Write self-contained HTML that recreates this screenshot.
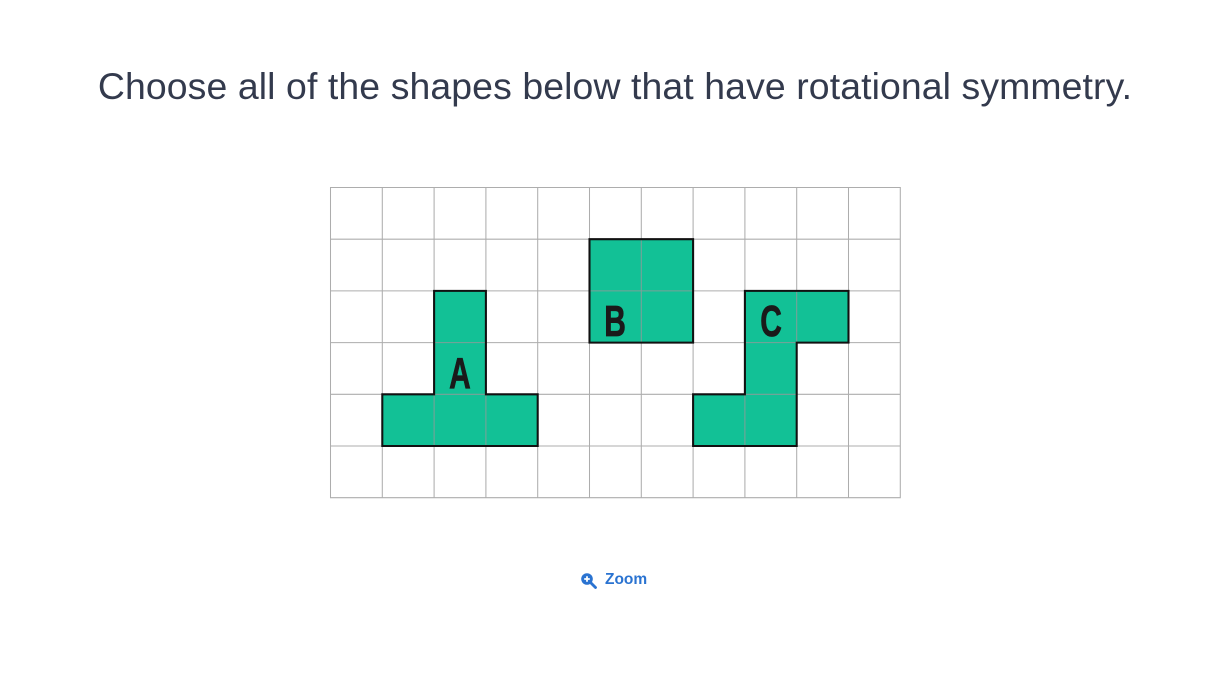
<!DOCTYPE html>
<html><head><style>
body{margin:0;width:1230px;height:673px;background:#fff;overflow:hidden;font-family:"Liberation Sans",sans-serif;}
h1{position:absolute;top:65px;left:0;width:1230px;text-align:center;margin:0;font-weight:400;font-size:37.4px;color:#333a4d;letter-spacing:0.1px;}
svg{position:absolute;left:0;top:0}
.z{position:absolute;left:580px;top:571px;color:#2a73d1;font-weight:700;font-size:15.5px;display:flex;align-items:center;gap:8px}
</style></head><body>
<h1>Choose all of the shapes below that have rotational symmetry.</h1>
<svg width="1230" height="673">
<g transform="translate(330.5,187.5) scale(51.8,51.7)">
<g fill="#12c196">
<path d="M2 2H3V4H4V5H1V4H2Z"/>
<path d="M5 1H7V3H5Z"/>
<path d="M8 2H10V3H9V5H7V4H8Z"/>
</g>
<g stroke="#999" stroke-width="0.02" fill="none" opacity="0.8">
<path d="M0 0H11V6H0Z M1 0V6M2 0V6M3 0V6M4 0V6M5 0V6M6 0V6M7 0V6M8 0V6M9 0V6M10 0V6 M0 1H11M0 2H11M0 3H11M0 4H11M0 5H11"/>
</g>
<g stroke="#111" stroke-width="0.04" fill="none">
<path d="M2 2H3V4H4V5H1V4H2Z"/>
<path d="M5 1H7V3H5Z"/>
<path d="M8 2H10V3H9V5H7V4H8Z"/>
</g>
</g>
<g font-family="Liberation Sans" font-weight="700" font-size="44" fill="#1a1a1a" stroke="#1a1a1a" stroke-width="0.8">
<text x="460" y="388" text-anchor="middle" transform="translate(460,0) scale(0.68,1) translate(-460,0)">A</text>
<text x="615" y="336" text-anchor="middle" transform="translate(615,0) scale(0.68,1) translate(-615,0)">B</text>
<text x="771" y="336" text-anchor="middle" transform="translate(771,0) scale(0.68,1) translate(-771,0)">C</text>
</g>
</svg>
<div class="z"><svg width="17" height="17" viewBox="0 0 17 17" style="position:static"><circle cx="7" cy="7" r="5.8" fill="#2a73d1"/><path d="M11 11L15.5 15.5" stroke="#2a73d1" stroke-width="2.8" stroke-linecap="round"/><path d="M7 4.2V9.8M4.2 7H9.8" stroke="#fff" stroke-width="1.8"/></svg>Zoom</div>
</body></html>
